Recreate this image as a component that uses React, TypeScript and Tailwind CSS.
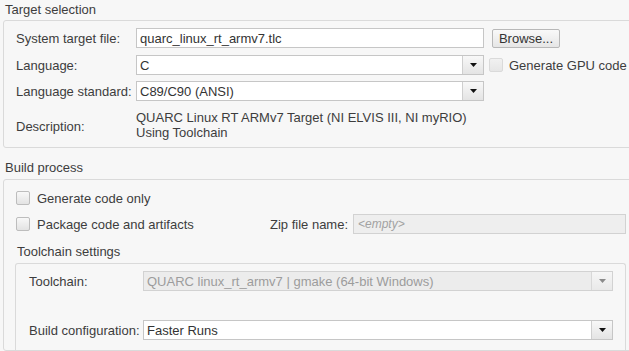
import React from "react";

const Arrow = ({ disabled }: { disabled?: boolean }) => (
  <svg width="7" height="4" viewBox="0 0 7 4">
    <path d="M0 0h7L3.5 4z" fill={disabled ? "#8a8a8a" : "#111"} />
  </svg>
);

const Dropdown = ({
  value,
  width,
  disabled,
}: {
  value: string;
  width: string;
  disabled?: boolean;
}) => (
  <div
    className={`flex h-[20px] border ${width} ${
      disabled ? "border-[#d2d2d2] bg-[#ececec] text-[#9c9c9c]" : "border-[#c6c6c6] bg-white text-[#333]"
    }`}
  >
    <div className="flex-1 flex items-center pl-[3px] whitespace-nowrap overflow-hidden">{value}</div>
    <div
      className={`w-[21px] flex items-center justify-center border-l ${
        disabled
          ? "border-[#d8d8d8] bg-gradient-to-b from-[#f6f6f6] to-[#e9e9e9]"
          : "border-[#cfcfcf] bg-gradient-to-b from-[#f8f8f8] to-[#e4e4e4]"
      }`}
    >
      <Arrow disabled={disabled} />
    </div>
  </div>
);

const Checkbox = ({ light }: { light?: boolean }) => (
  <div
    className={`w-[14px] h-[14px] border rounded-[2px] shrink-0 ${
      light
        ? "border-[#dadada] bg-gradient-to-b from-[#f1f1f1] to-[#e6e6e6]"
        : "border-[#bdbdbd] bg-gradient-to-b from-[#f8f8f8] to-[#e3e3e3]"
    }`}
  />
);

export default function App() {
  return (
    <div className="w-[629px] h-[351px] overflow-hidden bg-[#f7f7f7] text-[13px] leading-[15px] text-[#3d3d3d] font-['Liberation_Sans',Arial,sans-serif] flex flex-col">
      <div className="pl-[5px] pt-[2px] h-[20px] shrink-0">Target selection</div>
      <div className="ml-[3px] w-[660px] h-[128px] shrink-0 border border-[#dadada] rounded-[3px] pl-[12px] pt-[7px] flex flex-col">
        <div className="flex items-center h-[20px]">
          <div className="w-[120px]">System target file:</div>
          <div className="w-[348px] h-[20px] border border-[#c6c6c6] bg-white flex items-center pl-[3px] text-[#333]">
            quarc_linux_rt_armv7.tlc
          </div>
          <div className="ml-[8px] w-[68px] h-[19px] border border-[#b8b8b8] rounded-[2px] bg-gradient-to-b from-[#f9f9f9] to-[#e6e6e6] flex items-center justify-center text-[#333]">
            Browse...
          </div>
        </div>
        <div className="flex items-center h-[20px] mt-[7px]">
          <div className="w-[120px]">Language:</div>
          <Dropdown value="C" width="w-[348px]" />
          <div className="ml-[5px]">
            <Checkbox light />
          </div>
          <div className="ml-[6px] whitespace-nowrap">Generate GPU code</div>
        </div>
        <div className="flex items-center h-[20px] mt-[6px]">
          <div className="w-[120px]">Language standard:</div>
          <Dropdown value="C89/C90 (ANSI)" width="w-[348px]" />
        </div>
        <div className="flex mt-[9px]">
          <div className="w-[120px] pt-[9px]">Description:</div>
          <div>
            <div>QUARC Linux RT ARMv7 Target (NI ELVIS III, NI myRIO)</div>
            <div>Using Toolchain</div>
          </div>
        </div>
      </div>

      <div className="pl-[5px] pt-[12px] h-[31px] shrink-0">Build process</div>
      <div className="ml-[3px] w-[660px] flex-1 border border-[#dadada] rounded-[3px] pl-[12px] pt-[8px] flex flex-col">
        <div className="flex items-center h-[20px]">
          <Checkbox />
          <div className="ml-[7px]">Generate code only</div>
        </div>
        <div className="flex items-center h-[20px] mt-[6px]">
          <div className="w-[254px] flex items-center">
            <Checkbox />
            <div className="ml-[7px]">Package code and artifacts</div>
          </div>
          <div className="w-[83px] whitespace-nowrap">Zip file name:</div>
          <div className="w-[273px] h-[20px] border border-[#d2d2d2] bg-[#eeeeee] flex items-center pl-[4px] text-[12px] italic text-[#a2a2a2]">
            &lt;empty&gt;
          </div>
        </div>
        <div className="mt-[10px] pl-[1px]">Toolchain settings</div>
        <div className="mt-[4px] ml-[-1px] w-[611px] flex-1 border border-b-0 border-[#dadada] rounded-t-[3px] pl-[13px] pt-[7px] flex flex-col">
          <div className="flex items-center h-[20px]">
            <div className="w-[114px]">Toolchain:</div>
            <Dropdown value="QUARC linux_rt_armv7 | gmake (64-bit Windows)" width="w-[470px]" disabled />
          </div>
          <div className="flex items-center h-[20px] mt-[29px]">
            <div className="w-[114px] whitespace-nowrap">Build configuration:</div>
            <Dropdown value="Faster Runs" width="w-[470px]" />
          </div>
        </div>
      </div>
    </div>
  );
}
